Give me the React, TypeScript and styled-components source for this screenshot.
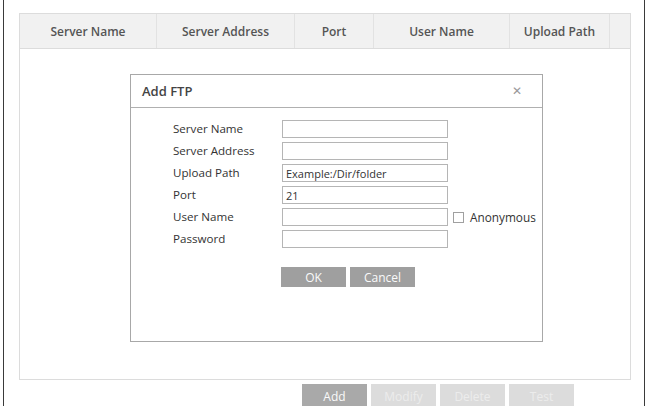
import React from "react";
import styled, { createGlobalStyle } from "styled-components";

const Global = createGlobalStyle`
  html, body { margin: 0; padding: 0; background: #fff; }
  body { font-family: "Open Sans", "Noto Sans", sans-serif; color: #333; }
  * { box-sizing: border-box; }
`;

const Frame = styled.div`
  margin-left: 3px;
  width: 642px;
  height: 406px;
  border-left: 1px solid #3a3a3a;
  border-right: 1px solid #3a3a3a;
  padding: 13px 0 0 15px;
  overflow: hidden;
`;

const Table = styled.div`
  width: 612px;
  height: 367px;
  border: 1px solid #dcdcdc;
  display: flex;
  flex-direction: column;
`;

const HeaderRow = styled.div`
  display: grid;
  grid-template-columns: 137px 138px 79px 136px 100px 1fr;
  height: 35px;
  background: #f1f1f1;
  border-bottom: 1px solid #dcdcdc;
`;

const HeaderCell = styled.div<{ $last?: boolean }>`
  display: flex;
  align-items: center;
  justify-content: center;
  border-right: ${(p) => (p.$last ? "none" : "1px solid #e2e2e2")};
  font-size: 12px;
  font-weight: 600;
  color: #555;
`;

const Body = styled.div`
  flex: 1;
  padding: 25px 0 0 110px;
`;

const Dialog = styled.div`
  width: 413px;
  height: 268px;
  border: 1.5px solid #a8a8a8;
  background: #fff;
  display: flex;
  flex-direction: column;
`;

const DialogHeader = styled.div`
  height: 33px;
  border-bottom: 1.5px solid #b0b0b0;
  display: flex;
  align-items: center;
  justify-content: space-between;
  padding: 0 20px 0 11px;
`;

const Title = styled.span`
  font-size: 13px;
  font-weight: 600;
  color: #444;
`;

const Close = styled.span`
  font-family: "DejaVu Sans", sans-serif;
  font-size: 12px;
  color: #999;
  line-height: 1;
`;

const Form = styled.div`
  display: grid;
  grid-template-columns: 109px 166px auto;
  grid-auto-rows: 18px;
  row-gap: 4px;
  padding: 12px 0 0 42px;
  align-items: center;
`;

const Label = styled.span`
  font-size: 11.6px;
  color: #333;
  white-space: nowrap;
  line-height: 18px;
`;

const Input = styled.div`
  height: 18px;
  border: 1px solid #b5b5b5;
  font-size: 11px;
  color: #333;
  padding-left: 3px;
  display: flex;
  align-items: center;
`;

const Extra = styled.label`
  display: flex;
  align-items: center;
  gap: 6px;
  padding-left: 5px;
  font-size: 11.8px;
  color: #333;
  white-space: nowrap;
`;

const Box = styled.span`
  width: 11px;
  height: 11px;
  border: 1px solid #a0a0a0;
  background: #fff;
`;

const ButtonRow = styled.div<{ $left: number; $top: number }>`
  display: flex;
  gap: 4px;
  padding-left: ${(p) => p.$left}px;
  margin-top: ${(p) => p.$top}px;
`;

const Button = styled.div<{ $tone: "dark" | "mid" | "light"; $h: number }>`
  width: 65px;
  height: ${(p) => p.$h}px;
  display: flex;
  align-items: center;
  justify-content: center;
  font-size: 12px;
  background: ${(p) =>
    p.$tone === "dark" ? "#a9a9a9" : p.$tone === "mid" ? "#9f9f9f" : "#dcdcdc"};
  color: ${(p) => (p.$tone === "light" ? "#ececec" : "#fafafa")};
`;

const columns = ["Server Name", "Server Address", "Port", "User Name", "Upload Path", ""];

const fields: { label: string; value?: string; extra?: boolean }[] = [
  { label: "Server Name" },
  { label: "Server Address" },
  { label: "Upload Path", value: "Example:/Dir/folder" },
  { label: "Port", value: "21" },
  { label: "User Name", extra: true },
  { label: "Password" },
];

export default function App() {
  return (
    <>
      <Global />
      <Frame>
        <Table>
          <HeaderRow>
            {columns.map((c, i) => (
              <HeaderCell key={i} $last={i === columns.length - 1}>
                {c}
              </HeaderCell>
            ))}
          </HeaderRow>
          <Body>
            <Dialog>
              <DialogHeader>
                <Title>Add FTP</Title>
                <Close>✕</Close>
              </DialogHeader>
              <Form>
                {fields.map((f) => (
                  <React.Fragment key={f.label}>
                    <Label>{f.label}</Label>
                    <Input>{f.value}</Input>
                    {f.extra ? (
                      <Extra>
                        <Box />
                        Anonymous
                      </Extra>
                    ) : (
                      <span />
                    )}
                  </React.Fragment>
                ))}
              </Form>
              <ButtonRow $left={150} $top={19}>
                <Button $tone="mid" $h={20}>OK</Button>
                <Button $tone="mid" $h={20}>Cancel</Button>
              </ButtonRow>
            </Dialog>
          </Body>
        </Table>
        <ButtonRow $left={283} $top={4}>
          <Button $tone="dark" $h={24}>Add</Button>
          <Button $tone="light" $h={24}>Modify</Button>
          <Button $tone="light" $h={24}>Delete</Button>
          <Button $tone="light" $h={24}>Test</Button>
        </ButtonRow>
      </Frame>
    </>
  );
}
